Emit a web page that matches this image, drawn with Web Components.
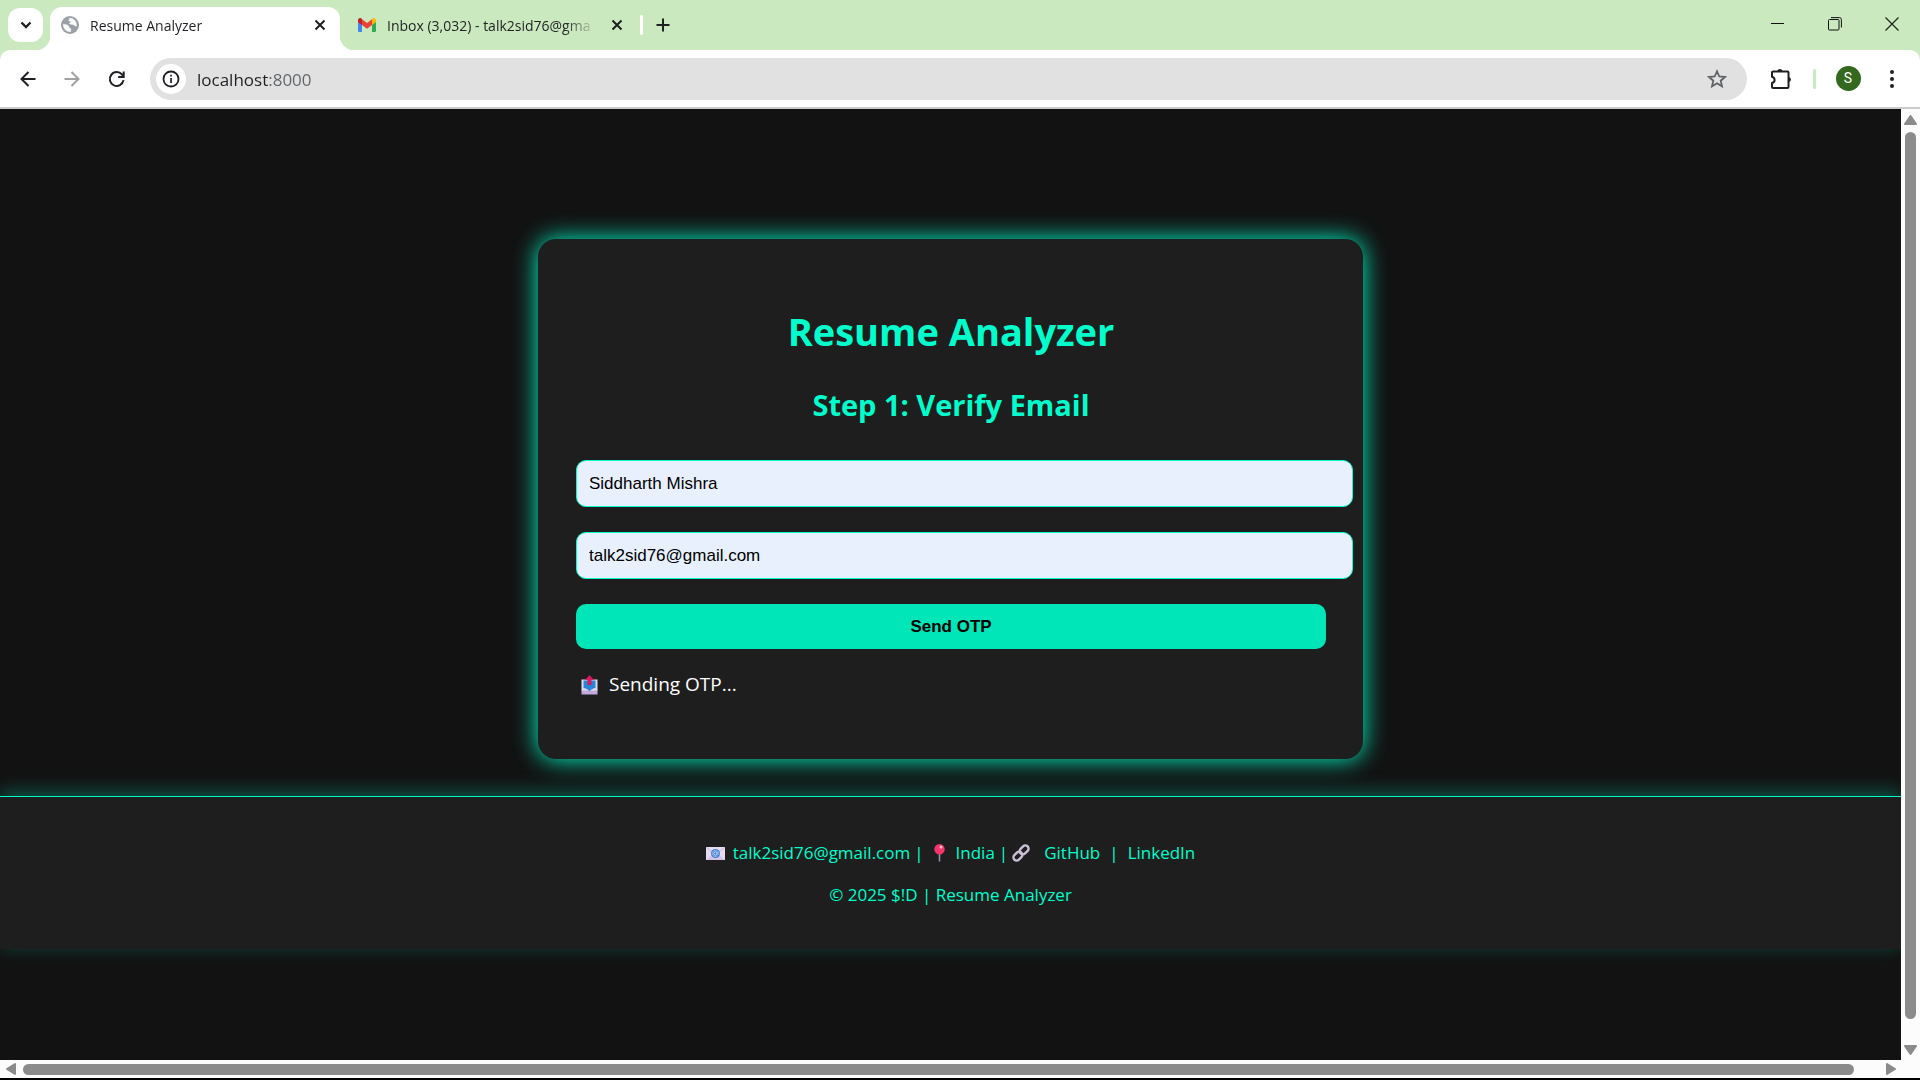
<!DOCTYPE html>
<html lang="en">
<head>
<meta charset="utf-8">
<title>Resume Analyzer</title>
<style>
  html, body { margin: 0; height: 100%; background: #000; overflow: hidden; }
  body { font-family: "Segoe UI", "Open Sans", "Noto Sans", sans-serif; }
</style>
</head>
<body>
<browser-window>
  <tab-strip slot="tabs">
    <browser-tab active label="Resume Analyzer">
      <svg slot="icon" width="18" height="18" viewBox="0 0 18 18" aria-hidden="true"><circle cx="9" cy="9" r="9" fill="#9aa0a6"/><path d="M2.2 8.2c2.6.3 4.3.5 5.2 1.6.7.9.3 2 1.6 2.3 1.1.3 1 1.8.6 3.6A7 7 0 0 1 2.2 8.2zM8.4 2.100c.8 1-.9 1.700-.6 2.600.3.8 1.900.2 1.900 1.400 0 1-1.600.8-1.300 1.700.4 1 2.600.2 4 1 1.100.7 1.500 1.400 3.200 1.200A7 7 0 0 0 8.400 2.100z" fill="#fff" stroke="#fff" stroke-width=".4"/></svg>
    </browser-tab>
    <browser-tab label="Inbox (3,032) - talk2sid76@gma">
      <svg slot="icon" width="18" height="14" viewBox="0 0 18 14" aria-hidden="true"><path d="M0 3v9.700C0 13.400.6 14 1.300 14H4V5z" fill="#4285f4"/><path d="M18 3v9.700c0 .7-.6 1.300-1.300 1.300H14V5z" fill="#34a853"/><path d="M14 1.200V7l4-3V2.200C18 .2 15.800-.7 14.400.6z" fill="#fbbc04"/><path d="M4 7V1.200l5 3.800 5-3.800V7l-5 3.700z" fill="#ea4335"/><path d="M0 2.200V4l4 3V1.200L3.600.6C2.200-.7 0 .2 0 2.200z" fill="#c5221f"/></svg>
    </browser-tab>
  </tab-strip>
  <tool-bar slot="toolbar" host="localhost" port=":8000"></tool-bar>
  <resume-card slot="page"></resume-card>
  <page-footer slot="page"></page-footer>
</browser-window>

<script>
const define = (name, html, setup) => {
  const template = document.createElement('template');
  template.innerHTML = html;
  customElements.define(name, class extends HTMLElement {
    constructor() {
      super();
      this.attachShadow({ mode: 'open' }).append(template.content.cloneNode(true));
    }
    connectedCallback() { if (setup) setup(this, this.shadowRoot); }
  });
};

const reset = `
  * { box-sizing: border-box; }
  button { margin: 0; padding: 0; border: 0; background: none; color: inherit; font: inherit;
    display: flex; align-items: center; justify-content: center; cursor: pointer; }
  svg { display: block; flex: none; }
`;

define('browser-tab', `
  <style>${reset}
    :host { display: flex; position: relative; align-items: center; box-sizing: border-box; width: 293px; height: 43px;
      margin-top: 7px; padding: 0 6px 7px 18px; gap: 11px; color: #1f2023; font-size: 14px; line-height: 20px; }
    :host([active]) { width: 290px; padding: 0 10px 7px 11px; background: #fff; border-radius: 12px 12px 0 0; }
    .flare { display: none; position: absolute; bottom: 0; width: 15px; height: 15px; }
    :host([active]) .flare { display: block; }
    .left { right: 100%; background: radial-gradient(circle at 0 0, transparent 15px, #fff 16px); }
    .right { left: 100%; background: radial-gradient(circle at 100% 0, transparent 15px, #fff 16px); }
    .select { flex: 1; min-width: 0; padding-top: 2px; }
    .title { flex: 1; min-width: 0; white-space: nowrap; text-align: left;
      mask-image: linear-gradient(to right, #000 calc(100% - 32px), transparent); }
    .close { width: 20px; height: 20px; }
  </style>
  <span class="flare left"></span><span class="flare right"></span>
  <slot name="icon"></slot>
  <button class="select"><span class="title"></span></button>
  <button class="close" aria-label="Close tab"><svg width="12" height="12" viewBox="0 0 12 12"><path d="M1.500 1.500l9 9M10.500 1.500l-9 9" stroke="#1f2023" stroke-width="2"/></svg></button>
`, (el, root) => { root.querySelector('.title').textContent = el.getAttribute('label'); });

define('tab-strip', `
  <style>${reset}
    :host { display: flex; height: 50px; background: #cbe9be; padding-left: 8px; }
    .search { width: 35px; height: 34px; margin: 8px 7px 0 0; background: #fff; border-radius: 12px; }
    .divider { width: 3px; height: 20px; margin: 15px 7px 0; border-radius: 2px; background: #fff; }
    .new { width: 26px; height: 26px; margin-top: 12px; }
    .controls { display: flex; margin-left: auto; height: 48px; }
    .controls button { width: 57px; }
  </style>
  <button class="search" aria-label="Search tabs"><svg width="12" height="8" viewBox="0 0 12 8"><path d="M1.500 1.500L6 6l4.500-4.500" fill="none" stroke="#1f2023" stroke-width="2.300"/></svg></button>
  <slot></slot>
  <span class="divider"></span>
  <button class="new" aria-label="New tab"><svg width="14" height="14" viewBox="0 0 14 14"><path d="M7 .5v13M.5 7h13" stroke="#1f2023" stroke-width="2"/></svg></button>
  <div class="controls">
    <button aria-label="Minimize"><svg width="13" height="13" viewBox="0 0 13 13"><path d="M0 5.500h13" stroke="#111"/></svg></button>
    <button aria-label="Restore"><svg width="14" height="14" viewBox="0 0 14 14" fill="none" stroke="#111"><rect x=".5" y="2.500" width="10.500" height="10.500" rx="1"/><path d="M3 .6h8.400a2 2 0 0 1 2 2V10.500"/></svg></button>
    <button aria-label="Close"><svg width="14" height="14" viewBox="0 0 14 14"><path d="M.5.5l13 13M13.500.5l-13 13" stroke="#222" stroke-width="1.200"/></svg></button>
  </div>
`);

define('tool-bar', `
  <style>${reset}
    :host { display: block; background: #cbe9be; color: #1f2023; }
    .bar { display: flex; align-items: center; height: 59px; padding: 0 6px; background: #fff;
      border-bottom: 2px solid #c9cccb; border-radius: 10px 10px 0 0; }
    .icon { width: 44px; height: 40px; }
    form { flex: 1; min-width: 0; display: flex; align-items: center; height: 42px; margin: 0 12px;
      padding: 0 8px 0 6px; gap: 11px; background: #e1e1e1; border-radius: 21px; }
    .info { width: 30px; height: 30px; border-radius: 50%; background: #fff; }
    input { flex: 1; min-width: 0; height: 30px; padding: 2px 0 0; border: 0; outline: 0; font: 17px/24px "Segoe UI", "Open Sans", "Noto Sans", sans-serif;
      background: linear-gradient(to right, #1f2023 71px, #5f6368 71px); -webkit-background-clip: text; background-clip: text;
      -webkit-text-fill-color: transparent; }
    .sep { width: 3px; height: 20px; margin: 0 10px; border-radius: 2px; background: #cbe9be; }
    .avatar span { width: 25px; height: 25px; border-radius: 50%; background: #33691e; color: #fff; font: 14px/25px Roboto, sans-serif; }
  </style>
  <div class="bar">
    <button class="icon" aria-label="Back"><svg width="16" height="16" viewBox="0 0 16 16" fill="none" stroke="#1f2023" stroke-width="2"><path d="M15.500 8H2M8.500 1L1.500 8l7 7"/></svg></button>
    <button class="icon" aria-label="Forward"><svg width="16" height="16" viewBox="0 0 16 16" fill="none" stroke="#a0a1a2" stroke-width="2"><path d="M.5 8H14M7.500 1l7 7-7 7"/></svg></button>
    <button class="icon" aria-label="Reload"><svg width="18" height="18" viewBox="0 0 18 18" fill="none" stroke="#1f2023" stroke-width="2"><path d="M16.500 10.200A6.900 6.900 0 1 1 15.100 4.700L16.200 6M16.700 1.500v5.500h-5.500"/></svg></button>
    <form>
      <button type="button" class="info" aria-label="View site information"><svg width="18" height="18" viewBox="0 0 18 18"><circle cx="9" cy="9" r="7.500" fill="none" stroke="#1f2023" stroke-width="1.800"/><path d="M8.200 4.700h1.700v1.700H8.200zM8.200 8h1.700v5H8.200z" fill="#1f2023"/></svg></button>
      <input aria-label="Address and search bar" spellcheck="false">
      <button type="button" class="icon" aria-label="Bookmark this tab"><svg width="20" height="20" viewBox="0 0 20 20"><path d="M10 2.300l2.300 5.200 5.700.5-4.300 3.700 1.300 5.600-5-3-5 3 1.300-5.600L2 8l5.700-.5z" fill="none" stroke="#5f6368" stroke-width="1.800"/></svg></button>
    </form>
    <button class="icon" aria-label="Extensions"><svg width="22" height="22" viewBox="0 0 22 22"><path d="M3 3.500h14.500a1 1 0 0 1 1 1V19a1 1 0 0 1-1 1H3a1 1 0 0 1-1-1v-4c1.600-.3 2.600-1.500 2.600-3S3.600 9 2 8.700V4.500a1 1 0 0 1 1-1z" fill="none" stroke="#1f2023" stroke-width="2"/><path d="M7.300 3.500a2.600 2.600 0 0 1 5.200 0zM18.500 9a2.500 2.500 0 0 1 0 5z" fill="#1f2023"/></svg></button>
    <span class="sep"></span>
    <button class="icon avatar" aria-label="Profile"><span>S</span></button>
    <button class="icon" aria-label="Menu"><svg width="4" height="18" viewBox="0 0 4 18" fill="#1f2023"><circle cx="2" cy="2" r="2"/><circle cx="2" cy="9" r="2"/><circle cx="2" cy="16" r="2"/></svg></button>
  </div>
`, (el, root) => { root.querySelector('input').value = el.getAttribute('host') + el.getAttribute('port'); });

define('scroll-bar', `
  <style>
    :host { display: flex; align-items: center; background: #fcfcfc; }
    :host([vertical]) { flex-direction: column; width: 19px; padding: 6px 0 5px; box-sizing: border-box; gap: 7px; }
    :host(:not([vertical])) { height: 18px; padding: 0 24px 0 6px; box-sizing: border-box; gap: 7px; }
    .thumb { background: #8b8b8b; border-radius: 6px; }
    :host([vertical]) .thumb { width: 11px; flex: 1; margin-bottom: 19px; }
    :host(:not([vertical])) .thumb { height: 11px; flex: 1; margin-right: 25px; }
    svg { display: block; fill: #8b8b8b; stroke: #8b8b8b; stroke-width: 2; stroke-linejoin: round; }
    :host([vertical]) .h, :host(:not([vertical])) .v { display: none; }
  </style>
  <svg class="v" width="13" height="10" viewBox="0 0 13 10"><path d="M1 9L6.500 1 12 9z"/></svg>
  <svg class="h" width="10" height="12" viewBox="0 0 10 12"><path d="M9 1L1 6l8 5z"/></svg>
  <div class="thumb"></div>
  <svg class="v" width="13" height="10" viewBox="0 0 13 10"><path d="M1 1l5.500 8L12 1z"/></svg>
  <svg class="h" width="10" height="12" viewBox="0 0 10 12"><path d="M1 1l8 5-8 5z"/></svg>
`);

define('browser-window', `
  <style>
    :host { display: flex; flex-direction: column; height: 100vh; box-sizing: border-box; padding-bottom: 2px; background: #000; }
    .view { flex: 1; min-height: 0; display: flex; }
    main { flex: 1; min-width: 0; overflow: hidden; background: #121212; padding-top: 130px; }
  </style>
  <slot name="tabs"></slot>
  <slot name="toolbar"></slot>
  <div class="view">
    <main><slot name="page"></slot></main>
    <scroll-bar vertical></scroll-bar>
  </div>
  <scroll-bar></scroll-bar>
`);

define('text-field', `
  <style>
    :host { display: block; margin-bottom: 25px; }
    input { display: block; box-sizing: border-box; width: calc(100% + 27px); height: 47px; padding: 0 12px;
      border: 1px solid #00ffcc; border-radius: 10px; background: #e8f0fe; color: #000; outline: 0;
      font: 17px/20px "Liberation Sans", Arial, sans-serif; }
  </style>
  <input>
`, (el, root) => {
  const input = root.querySelector('input');
  input.type = el.getAttribute('type');
  input.value = el.getAttribute('value');
  input.setAttribute('aria-label', el.getAttribute('label'));
});

define('resume-card', `
  <style>${reset}
    :host { display: block; box-sizing: border-box; max-width: 825px; margin: 0 auto; padding: 62px 37px 59px 38px;
      background: #1e1e1e; border-radius: 18px; box-shadow: 0 0 25px #00ffcc; color: #fff; }
    h1, h2 { margin: 0; text-align: center; color: #00ffcc; font-weight: 700; }
    h1 { font-size: 38px; line-height: 60px; }
    h2 { font-size: 29px; line-height: 44px; margin: 22px 0 33px; }
    .send { width: 100%; height: 45px; border-radius: 10px; background: #00e6b8; color: #000;
      font: 700 17px/20px "Liberation Sans", Arial, sans-serif; }
    p { display: flex; align-items: center; gap: 11px; margin: 20px 0 0; padding-left: 5px; font-size: 19px; line-height: 31px; }
  </style>
  <h1>Resume Analyzer</h1>
  <h2>Step 1: Verify Email</h2>
  <text-field type="text" label="Name" value="Siddharth Mishra"></text-field>
  <text-field type="email" label="Email" value="talk2sid76@gmail.com"></text-field>
  <button class="send" type="submit">Send OTP</button>
  <p><svg width="17" height="20" viewBox="0 0 17 20" aria-hidden="true"><path d="M.5 4.500h16V16H.5z" fill="#e3dbec"/><path d="M.5 15.500h16v4H.5z" fill="#c3a9dc"/><path d="M2.500 5.500h12V13l-2.500.5-1 1H10l-1.500 2-1.500-2H6l-1-1-2.500-.5z" fill="#2685d8"/><path d="M8.500 0L13 5h-2.500v5h-4V5H4z" fill="#d81b60"/></svg><span>Sending OTP...</span></p>
`);

define('page-footer', `
  <style>${reset}
    :host { display: block; margin-top: 37px; padding: 41px 20px 39px; border-top: 1px solid #00ffcc; background: #1e1e1e;
      box-shadow: 0 -4px 18px rgba(0, 255, 204, .3); color: #00ffcc; font-size: 17px; line-height: 30px; text-align: center; }
    .contact { display: flex; justify-content: center; align-items: center; gap: 4px; white-space: nowrap; }
    .copy { margin-top: 12px; }
    a { color: inherit; text-decoration: none; }
    .links { display: flex; gap: 9px; margin-left: 10px; }
    .mail { margin-right: 4px; }
    .pin { margin: 0 7px 0 6px; }
  </style>
  <div class="contact">
    <svg class="mail" width="19" height="13" viewBox="0 0 19 13" aria-hidden="true"><path d="M0 0h19v13H0z" fill="#e6dcf1"/><path d="M0 13l7-6h5l7 6z" fill="#d3c3e4"/><path d="M0 0l7 6M19 0l-7 6" stroke="#c9b8dd"/><circle cx="9.500" cy="6.500" r="4.500" fill="#3f7fd8"/><circle cx="9.500" cy="6.500" r="1.700" fill="none" stroke="#d9e6fa"/><path d="M11.200 5v2.300c0 1 1.500.8 1.500-.8A3.200 3.200 0 1 0 11 9.300" fill="none" stroke="#a9c7f2" stroke-width=".7"/></svg>
    <span>talk2sid76@gmail.com</span><span>|</span>
    <svg class="pin" width="11" height="18" viewBox="0 0 11 18" aria-hidden="true"><path d="M4.700 9h1.600v8.500H4.700z" fill="#998ca6"/><circle cx="5.500" cy="5.300" r="5.200" fill="#f8356b"/><circle cx="7" cy="3" r="1.500" fill="#ffc0d0"/></svg>
    <span>India</span><span>|</span>
    <svg width="18" height="18" viewBox="0 0 18 18" fill="none" stroke="#cbbfd6" stroke-width="2.400" aria-hidden="true"><rect x="-5" y="-3.200" width="10" height="6.400" rx="3.200" transform="translate(5.900 12.100) rotate(-45)"/><rect x="-5" y="-3.200" width="10" height="6.400" rx="3.200" transform="translate(12.100 5.900) rotate(-45)"/></svg>
    <span class="links"><a href="#github">GitHub</a><span>|</span><a href="#linkedin">LinkedIn</a></span>
  </div>
  <div class="copy">© 2025 $!D | Resume Analyzer</div>
`);
</script>
</body>
</html>
